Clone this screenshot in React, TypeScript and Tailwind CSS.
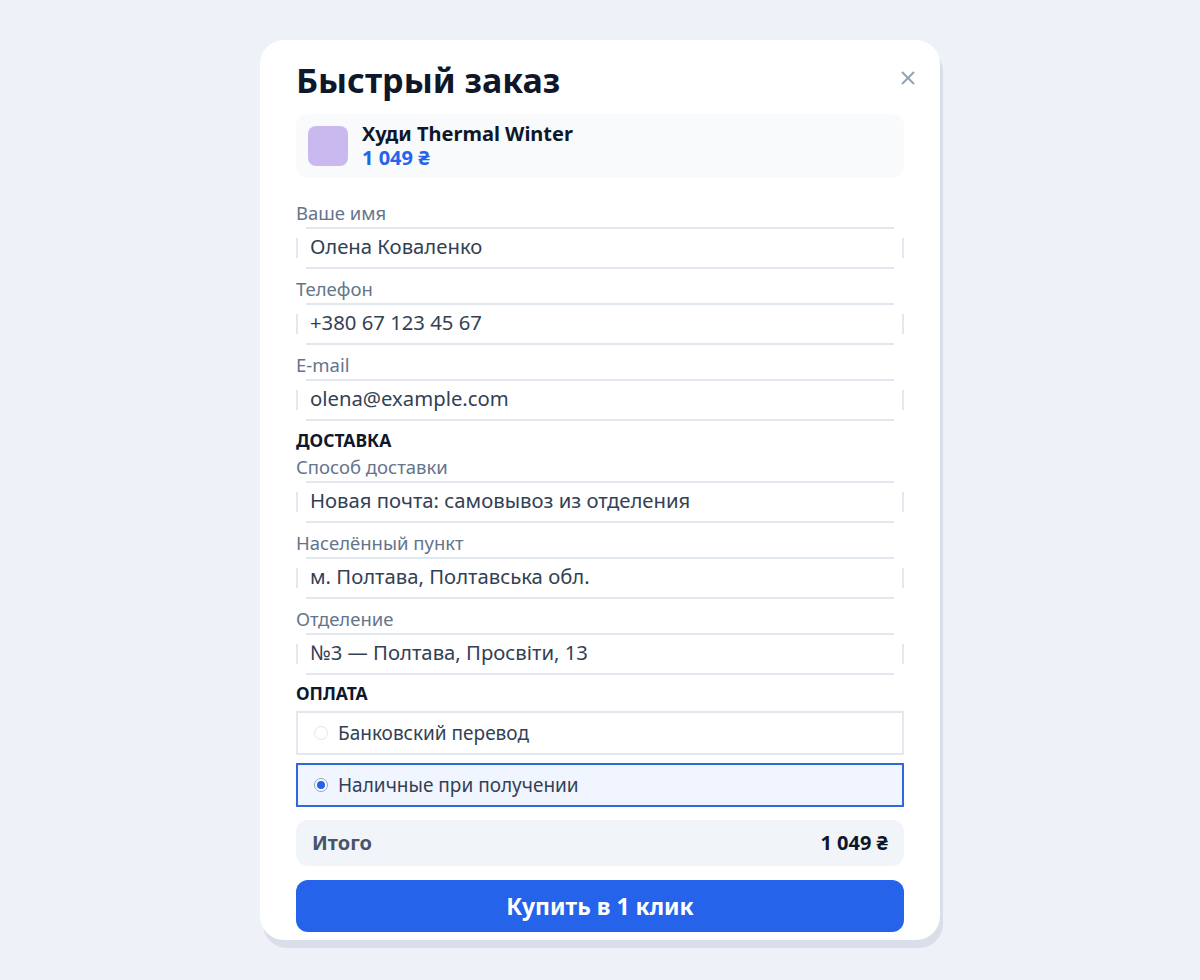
import { X } from 'lucide-react'

const CONTACT = [
  { label: 'Ваше имя', value: 'Олена Коваленко' },
  { label: 'Телефон', value: '+380 67 123 45 67' },
  { label: 'E-mail', value: 'olena@example.com' },
]

const DELIVERY = [
  { label: 'Способ доставки', value: 'Новая почта: самовывоз из отделения' },
  { label: 'Населённый пункт', value: 'м. Полтава, Полтавська обл.' },
  { label: 'Отделение', value: '№3 — Полтава, Просвіти, 13' },
]

function Field({ label, value }: { label: string; value: string }) {
  return (
    <div className="mb-2">
      <div className="text-[18.5px] leading-6 text-[#64748b]">{label}</div>
      <div className="mt-[2px] flex items-center h-[42px]">
        <div className="w-[2px] h-5 bg-[#e2e8f0]" />
        <div className="flex-1 mx-2 h-full border-y-2 border-[#e2e8f0] flex items-center px-1 pb-1 text-[20.3px] text-[#334155]">
          {value}
        </div>
        <div className="w-[2px] h-5 bg-[#e2e8f0]" />
      </div>
    </div>
  )
}

export default function App() {
  return (
    <div
      className="min-h-screen bg-[#eef1f8] flex justify-center pt-10"
      style={{ fontFamily: '"Noto Sans", "Open Sans", sans-serif' }}
    >
      <div className="w-[680px] h-[900px] bg-white rounded-3xl shadow-[3px_8px_0_#d9dee8] px-9 pt-5 pb-2 flex flex-col">
        {/* Header */}
        <div className="flex items-center justify-between">
          <h1 className="text-[34px] leading-10 font-bold text-[#0f172a]">Быстрый заказ</h1>
          <button className="text-[#94a3b8] -mr-[15px] -mt-1">
            <X size={22} strokeWidth={2.2} />
          </button>
        </div>

        {/* Product */}
        <div className="mt-[14px] h-16 bg-[#f8fafc] rounded-xl px-3 flex items-center gap-[14px]">
          <div className="w-10 h-10 rounded-lg bg-[#c9b9ee]" />
          <div className="flex flex-col gap-[2px]">
            <div className="text-[20px] leading-[22px] font-bold text-[#0f172a]">Худи Thermal Winter</div>
            <div className="text-[20px] leading-[22px] font-bold text-[#2563eb]">1 049 ₴</div>
          </div>
        </div>

        <div className="mt-[23px]">
          {CONTACT.map((f) => (
            <Field key={f.label} {...f} />
          ))}
        </div>

        <div className="mt-[1px] text-[17.5px] leading-5 font-bold text-[#0f172a] uppercase">Доставка</div>
        <div className="mt-[5px]">
          {DELIVERY.map((f) => (
            <Field key={f.label} {...f} />
          ))}
        </div>

        <div className="text-[17.5px] leading-5 font-bold text-[#0f172a] uppercase">Оплата</div>

        {/* Payment */}
        <div className="mt-2 flex flex-col gap-2">
          <label className="h-11 border-2 border-[#e2e8f0] flex items-center px-4 gap-[10px] text-[19px] text-[#334155]">
            <span className="w-[14px] h-[14px] rounded-full border border-[#e2e8f0]" />
            Банковский перевод
          </label>
          <label className="h-11 border-2 border-[#2f6ad9] bg-[#f0f5ff] flex items-center px-4 gap-[10px] text-[19px] text-[#334155]">
            <span className="w-[14px] h-[14px] rounded-full border border-[#94a3b8] bg-white flex items-center justify-center">
              <span className="w-2 h-2 rounded-full bg-[#2563eb]" />
            </span>
            Наличные при получении
          </label>
        </div>

        {/* Total */}
        <div className="mt-[13px] h-[46px] bg-[#f1f5f9] rounded-xl px-4 flex items-center justify-between">
          <span className="text-[20px] font-bold text-[#475569]">Итого</span>
          <span className="text-[20px] font-bold text-[#0f172a]">1 049 ₴</span>
        </div>

        <button className="mt-[14px] h-[52px] bg-[#2563eb] rounded-xl text-white text-[23px] font-bold">
          Купить в 1 клик
        </button>
      </div>
    </div>
  )
}
